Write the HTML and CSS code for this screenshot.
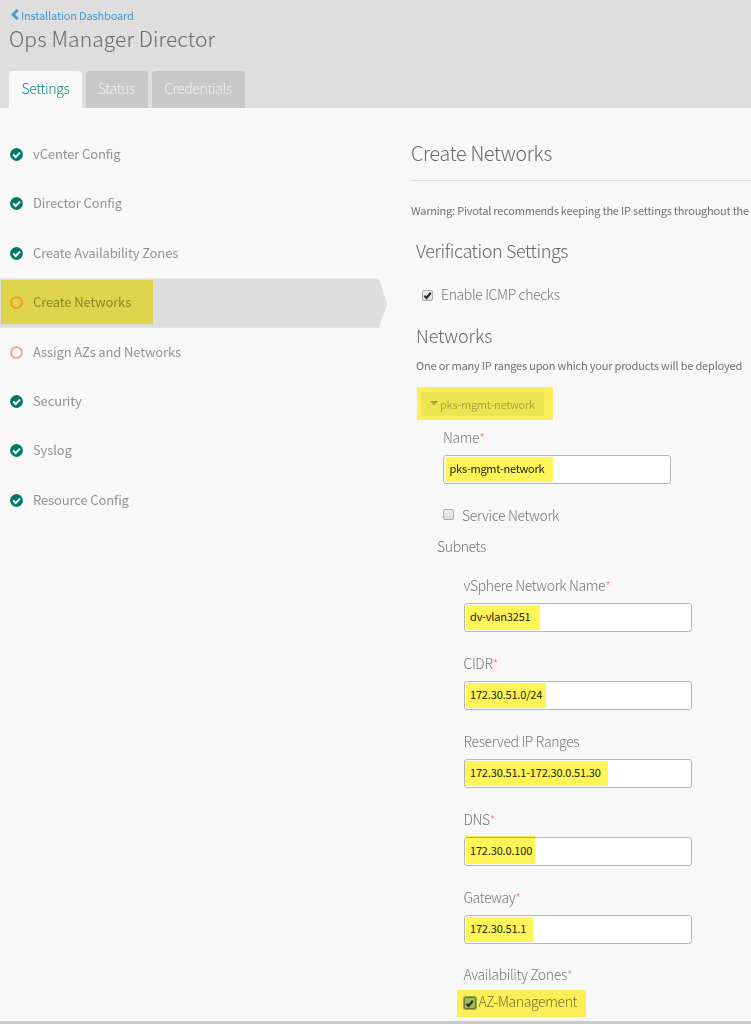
FILE: index.html
```html
<!DOCTYPE html>
<html lang="en">
<head>
<meta charset="utf-8">
<title>Ops Manager Director</title>
<link rel="stylesheet" href="styles.css">
</head>
<body>
<svg class="defs" width="0" height="0" aria-hidden="true">
  <symbol id="done" viewBox="0 0 13 13"><circle cx="6.5" cy="6.5" r="6.4" fill="#00796b"/><path d="M3.2 6.5 5.7 9 10 4.6" fill="none" stroke="#fff" stroke-width="2"/></symbol>
  <symbol id="todo" viewBox="0 0 13 13"><circle cx="6.5" cy="6.5" r="5.4" fill="none" stroke="currentColor" stroke-width="1.9"/></symbol>
  <symbol id="tick" viewBox="0 0 11 11"><path d="M2.4 5.8 4.5 8 8.8 2.7" fill="none" stroke="#333" stroke-width="2.3"/></symbol>
</svg>
<header class="header">
  <a class="back"><svg width="8" height="11" viewBox="0 0 8 11"><path d="M6.6 1 2 5.5 6.6 10" fill="none" stroke="currentColor" stroke-width="2.7"/></svg><span>Installation Dashboard</span></a>
  <h1 class="title">Ops Manager Director</h1>
  <nav class="tabs">
    <a class="tab tab-settings">Settings</a>
    <a class="tab tab-status">Status</a>
    <a class="tab tab-credentials">Credentials</a>
  </nav>
</header>
<div class="body">
  <ul class="steps">
    <li class="step"><svg class="icon"><use href="#done"/></svg><span>vCenter Config</span></li>
    <li class="step"><svg class="icon"><use href="#done"/></svg><span>Director Config</span></li>
    <li class="step"><svg class="icon"><use href="#done"/></svg><span>Create Availability Zones</span></li>
    <li class="step active"><svg class="icon"><use href="#todo"/></svg><span>Create Networks</span><i class="marker"></i></li>
    <li class="step"><svg class="icon"><use href="#todo"/></svg><span>Assign AZs and Networks</span></li>
    <li class="step"><svg class="icon"><use href="#done"/></svg><span>Security</span></li>
    <li class="step"><svg class="icon"><use href="#done"/></svg><span>Syslog</span></li>
    <li class="step"><svg class="icon"><use href="#done"/></svg><span>Resource Config</span></li>
  </ul>
  <main class="main">
    <h2 class="heading">Create Networks</h2>
    <p class="warning">Warning: Pivotal recommends keeping the IP settings throughout the</p>
    <section class="form">
      <h3 class="subheading">Verification Settings</h3>
      <label class="check icmp"><span class="box"><svg width="11" height="11"><use href="#tick"/></svg></span>Enable ICMP checks</label>
      <h3 class="subheading networks">Networks</h3>
      <p class="note">One or many IP ranges upon which your products will be deployed</p>
      <div class="toggle-area"><div class="toggle"><svg width="8" height="5" viewBox="0 0 8 5"><path d="M0 0h8L4 4.6z" fill="currentColor"/></svg>pks-mgmt-network</div></div>
      <div class="network">
        <div class="label">Name<sup>*</sup></div>
        <div class="input network-name"><span>pks-mgmt-network</span><i class="marker m-name"></i></div>
        <label class="check service"><span class="box"></span>Service Network</label>
      </div>
      <div class="subnets-title">Subnets</div>
      <div class="subnets">
        <div class="field"><div class="label">vSphere Network Name<sup>*</sup></div><div class="input"><span>dv-vlan3251</span><i class="marker m-vlan"></i></div></div>
        <div class="field"><div class="label">CIDR<sup>*</sup></div><div class="input"><span>172.30.51.0/24</span><i class="marker m-cidr"></i></div></div>
        <div class="field"><div class="label">Reserved IP Ranges</div><div class="input"><span>172.30.51.1-172.30.0.51.30</span><i class="marker m-range"></i></div></div>
        <div class="field"><div class="label">DNS<sup>*</sup></div><div class="input"><span>172.30.0.100</span><i class="marker m-dns"></i></div></div>
        <div class="field"><div class="label">Gateway<sup>*</sup></div><div class="input"><span>172.30.51.1</span><i class="marker m-gateway"></i></div></div>
        <div class="label">Availability Zones<sup>*</sup></div>
        <label class="check zone"><span class="box focus"><svg width="11" height="11"><use href="#tick"/></svg></span><span class="zone-name">AZ-Management</span></label>
      </div>
    </section>
  </main>
</div>
<footer class="footer"></footer>
</body>
</html>
```
FILE: styles.css
```css
* { box-sizing: border-box; }
body { margin: 0; width: 751px; height: 1024px; overflow: hidden; display: flex; flex-direction: column; background: #f8f8f8; color: #787878; font: 300 14px/20px "Noto Sans CJK SC", sans-serif; letter-spacing: -0.37px; }
h1, h2, h3, p, ul { margin: 0; padding: 0; font-weight: 300; }
.defs { position: absolute; }
.header { height: 108px; flex: none; background: #dedede; padding: 5px 0 0 9px; }
.back { display: flex; align-items: center; gap: 2px; height: 19px; padding-left: 2px; color: #4098d0; font-size: 11px; font-weight: 400; letter-spacing: -0.16px; }
.title { font-size: 21px; line-height: 28px; color: #686868; letter-spacing: 0.1px; }
.tabs { display: flex; gap: 4px; margin-top: 19px; }
.tab { height: 37px; line-height: 34px; text-align: center; border-radius: 4px 4px 0 0; background: #c8c8c8; color: #f0f0f0; }
.tab-settings { width: 73px; background: #f8f8f8; color: #16877b; }
.tab-status { width: 62px; padding-right: 1px; }
.tab-credentials { width: 93px; padding-right: 1px; }
.body { display: flex; flex: 1; min-height: 0; }
.steps { list-style: none; width: 387px; flex: none; padding-top: 22.3px; }
.step { position: relative; display: flex; align-items: center; gap: 10px; height: 49.4px; padding-left: 10px; font-weight: 400; font-size: 13px; color: #939393; letter-spacing: -0.13px; }
.step span { margin-top: -2px; }
.icon { width: 13px; height: 13px; margin-top: -1px; color: #ff9b87; }
.active { background: #ddd; color: #8c8c8c; clip-path: polygon(0 0, 379px 0, 100% 52%, 379px 100%, 0 100%); }
.active .icon { color: #ff9b54; }
.marker { position: absolute; background: #fff556; mix-blend-mode: multiply; top: 1px; bottom: 1px; left: 1px; }
.active .marker { width: 152px; top: 1.5px; bottom: 4px; }
.main { flex: 1; min-width: 0; margin-left: 24px; padding-top: 30px; overflow: hidden; }
.heading { height: 43px; line-height: 30px; font-size: 19.5px; color: #686868; border-bottom: 1px solid #ddd; letter-spacing: -0.22px; }
.warning { margin-top: 19px; font-size: 11px; font-weight: 400; white-space: nowrap; color: #707070; letter-spacing: -0.21px; }
.form { padding-left: 5px; }
.subheading { margin-top: 17px; font-size: 18px; line-height: 26px; color: #686868; letter-spacing: -0.4px; }
.check { display: flex; align-items: center; }
.box { width: 11px; height: 11px; flex: none; display: flex; align-items: center; justify-content: center; border: 1px solid #aaa; border-radius: 2px; background: linear-gradient(#eee, #ddd); }
.box svg { flex: none; }
.icmp { margin-top: 21px; padding-left: 6px; gap: 8px; }
.icmp .box { margin-top: 2px; }
.networks { margin-top: 18px; letter-spacing: -0.1px; }
.note { margin-top: 7px; font-size: 11px; font-weight: 400; white-space: nowrap; color: #707070; letter-spacing: -0.19px; }
.toggle-area { width: 136px; height: 33px; margin: 12px 0 0 1px; padding: 5px 0 0 4px; background: #f9ee57; }
.toggle { display: flex; align-items: center; gap: 2px; width: 123px; height: 24px; padding: 0 0 1px 9px; background: #ede451; color: #aea63c; font-size: 11px; font-weight: 400; letter-spacing: -0.25px; }
.network { padding: 7px 0 0 27px; }
.label { height: 28px; line-height: 20px; }
.label sup { color: #ff806b; font-size: 13px; line-height: 0; vertical-align: 0; }
.input { position: relative; width: 228px; height: 29px; border: 1px solid #b5b5b5; border-radius: 3px; background: #fff; padding-left: 5.5px; line-height: 25px; color: #222; font-size: 11px; font-weight: 400; letter-spacing: -0.17px; }
.network-name { letter-spacing: -0.25px; }
.service { margin-top: 21px; gap: 8px; }
.service .box { margin-top: -2px; }
.subnets-title { margin: 11px 0 18px 21px; }
.subnets { padding-left: 47.5px; }
.field { height: 78.1px; }
.field .input { line-height: 24px; }
.m-name { width: 108px; }
.m-vlan { width: 74px; }
.m-cidr { width: 80px; }
.m-range { width: 143px; left: 0; }
.m-dns { width: 69px; top: -2px; }
.m-gateway { width: 67px; }
.zone { width: 129px; height: 27px; margin: -2.5px 0 0 -6.5px; padding-left: 6.5px; gap: 3px; background: #faef57; color: #777233; }
.zone-name { margin-top: -4px; }
.focus { width: 12px; height: 12px; border-color: #657c2b; background: #a5ba50; box-shadow: 0 0 0 1px #8eac4c; }
.field .label, .field .input { position: relative; top: 0.5px; }
.footer { height: 3px; flex: none; background: #cbcbcb; }
```
